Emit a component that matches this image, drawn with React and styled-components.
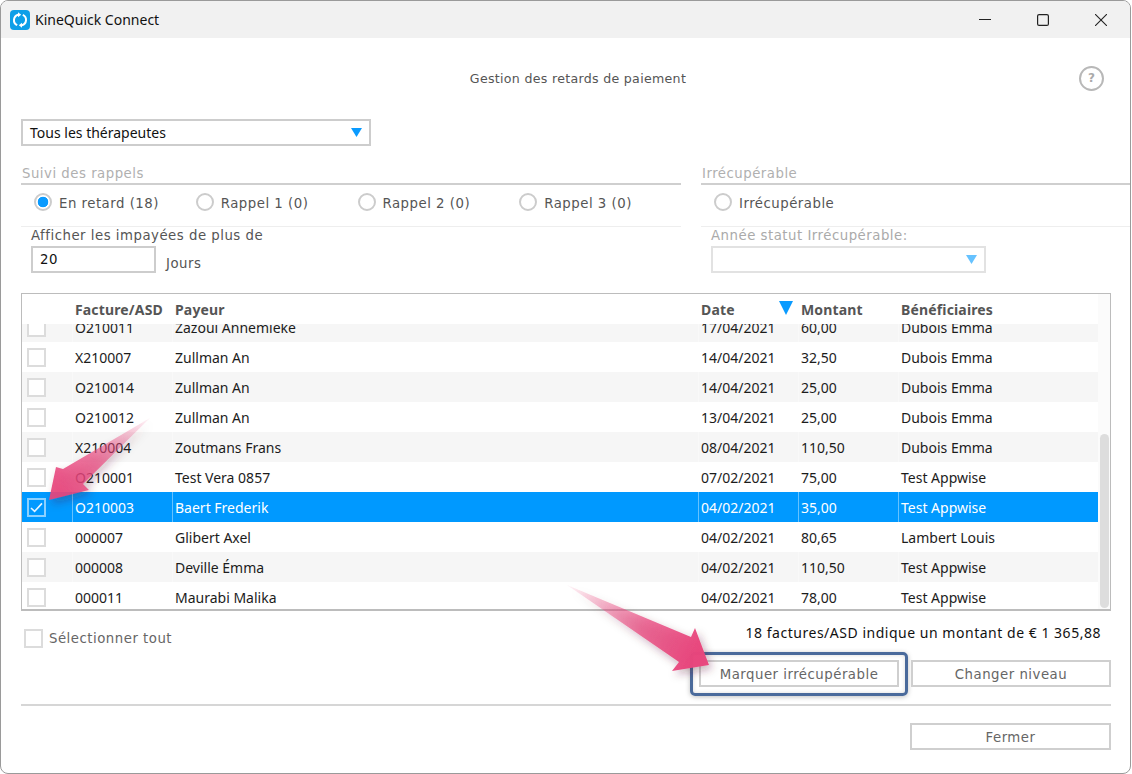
import React from 'react';
import styled, { createGlobalStyle } from 'styled-components';

const GlobalStyle = createGlobalStyle`
  html, body {
    margin: 0;
    padding: 0;
    background: #fff;
  }
  * {
    box-sizing: border-box;
  }
`;

const uiFont = `"DejaVu Sans", Verdana, sans-serif`;
const gridFont = `"Noto Sans", "Open Sans", sans-serif`;
const COLUMNS = '50px 100px 526px 100px 100px 200px';

const Window = styled.div`
  position: relative;
  width: 1131px;
  height: 774px;
  background: #fff;
  border: 1px solid #9a9a9a;
  border-radius: 8px;
  overflow: hidden;
  font-family: ${uiFont};
  letter-spacing: 0.5px;
`;

const TitleBar = styled.div`
  display: flex;
  align-items: center;
  height: 37px;
  padding-left: 9px;
  background: #f1f1f1;
`;

const AppName = styled.span`
  margin-left: 5px;
  flex: 1;
  font: 14px ${gridFont};
  letter-spacing: 0;
  color: #111;
`;

const WinButton = styled.span`
  display: flex;
  justify-content: center;
  width: 58px;
  color: #222;
`;

const Content = styled.div`
  padding: 0 19px 0 20px;
`;

const Header = styled.div`
  display: flex;
  align-items: center;
  height: 24px;
  margin-top: 28px;
`;

const PageTitle = styled.h1`
  flex: 1;
  margin: 0;
  padding: 1px 0 0 56px;
  text-align: center;
  font-size: 12.6px;
  font-weight: 400;
  letter-spacing: 0.3px;
  color: #555;
`;

const HelpIcon = styled.span`
  display: flex;
  align-items: center;
  justify-content: center;
  width: 25px;
  height: 25px;
  margin-right: 7px;
  border: 2px solid #b8b8b8;
  border-radius: 50%;
  font-size: 12px;
  font-weight: 700;
  letter-spacing: 0;
  color: #aaa;
`;

const Select = styled.div`
  display: flex;
  align-items: center;
  justify-content: space-between;
  width: ${(p) => p.$width}px;
  height: 27px;
  padding: 0 7px;
  background: #fff;
  border: 2px solid ${(p) => (p.$disabled ? '#e2e2e2' : '#cdcdcd')};
  font: 14px ${gridFont};
  letter-spacing: 0;
  color: #111;
`;

const TherapistSelect = styled(Select)`
  margin-top: 29px;
`;

const Caret = styled.span`
  width: 11px;
  height: 9px;
  background: ${(p) => (p.$disabled ? '#66c2ff' : '#0a9bff')};
  clip-path: polygon(0 0, 100% 0, 50% 100%);
`;

const Filters = styled.div`
  display: flex;
  gap: 20px;
  margin: 18px -19px 0 0;
`;

const Group = styled.section`
  width: ${(p) => p.$width}px;
`;

const GroupTitle = styled.div`
  height: 21px;
  padding: 2px 0 0 1px;
  border-bottom: 2px solid #cfcfcf;
  font-size: 13.3px;
  line-height: 16px;
  color: #b0b0b0;
`;

const RadioRow = styled.div`
  display: flex;
  height: 42px;
  padding: 8px 0 0 13px;
  border-bottom: 1px solid #eeeeee;
`;

const RadioItem = styled.label`
  display: flex;
  align-items: center;
  gap: 7px;
  width: 162.7px;
  height: 20px;
  font-size: 13.3px;
  color: #555;
  white-space: nowrap;
`;

const RadioCircle = styled.span`
  flex: none;
  width: 18px;
  height: 18px;
  margin-bottom: 2px;
  border: 2px solid #cccccc;
  border-radius: 50%;
  background: ${(p) =>
    p.$checked ? 'radial-gradient(circle, #0a9bff 0 5px, #fff 5.6px)' : '#fff'};
`;

const SubBlock = styled.div`
  padding-left: 10px;
`;

const SubLabel = styled.div`
  height: 19px;
  font-size: 13.3px;
  line-height: 18px;
  color: ${(p) => (p.$muted ? '#aaaaaa' : '#555')};
`;

const DaysRow = styled.div`
  display: flex;
  align-items: flex-end;
  gap: 10px;
`;

const DaysInput = styled.div`
  display: flex;
  align-items: center;
  width: 125px;
  height: 27px;
  padding-left: 7px;
  border: 2px solid #cdcdcd;
  font-size: 13.3px;
  color: #111;
`;

const DaysUnit = styled.span`
  padding-bottom: 2px;
  font-size: 13.3px;
  color: #555;
`;

const Table = styled.div`
  display: flex;
  height: 318px;
  margin-top: 20px;
  border: 1px solid #bcbcbc;
  border-bottom-width: 2px;
  overflow: hidden;
`;

const TableMain = styled.div`
  width: 1076px;
  overflow: hidden;
  font-family: ${gridFont};
  letter-spacing: 0;
`;

const HeadRow = styled.div`
  position: relative;
  z-index: 1;
  display: grid;
  grid-template-columns: ${COLUMNS};
  height: 30px;
  background: #fff;
`;

const HeadCell = styled.div`
  display: flex;
  align-items: center;
  justify-content: space-between;
  padding: 0 5px 0 3px;
  font-size: 14px;
  font-weight: 700;
  letter-spacing: 0.15px;
  color: #555;
`;

const SortMark = styled.span`
  width: 14px;
  height: 14px;
  margin-top: -2px;
  background: #0a9bff;
  clip-path: polygon(0 0, 100% 0, 50% 100%);
`;

const RowList = styled.div`
  margin-top: -12px;
`;

const Row = styled.div`
  display: grid;
  grid-template-columns: ${COLUMNS};
  height: 30px;
  background: ${(p) => (p.$selected ? '#0099ff' : p.$alt ? '#f6f6f6' : '#fff')};
  color: ${(p) => (p.$selected ? '#fff' : '#1c1c1c')};
`;

const Cell = styled.div`
  display: flex;
  align-items: center;
  padding-left: 2px;
  border-left: 1px solid rgba(255, 255, 255, 0.4);
  font-size: 14px;
  white-space: nowrap;
`;

const CheckCell = styled.div`
  display: flex;
  align-items: center;
  padding-left: 5px;
`;

const Box = styled.span`
  display: flex;
  flex: none;
  align-items: center;
  justify-content: center;
  width: 19px;
  height: 19px;
  border: 2px solid ${(p) => (p.$onBlue ? 'rgba(255,255,255,0.55)' : '#dcdcdc')};
  background: ${(p) => (p.$onBlue ? 'transparent' : '#fff')};
`;

const ScrollTrack = styled.div`
  flex: 1;
  padding: 140px 1px 1px 2px;
  background: #fbfbfb;
`;

const ScrollThumb = styled.div`
  height: 174px;
  background: #dddddd;
  border-radius: 5px;
`;

const Footer = styled.div`
  display: flex;
  justify-content: space-between;
  margin-top: 13px;
`;

const SelectAll = styled.label`
  display: flex;
  align-items: center;
  gap: 6px;
  height: 19px;
  margin: 5px 0 0 3px;
  font-size: 13.3px;
  color: #666;
`;

const Summary = styled.div`
  display: flex;
  flex-direction: column;
  align-items: flex-end;
`;

const Total = styled.div`
  height: 18px;
  margin-right: 10px;
  font: 14px/18px ${gridFont};
  letter-spacing: 0.52px;
  color: #111;
`;

const Actions = styled.div`
  display: flex;
  gap: 12px;
  margin-top: 18px;
`;

const Button = styled.button`
  position: relative;
  width: 200px;
  height: 27px;
  padding: 1px 0 0;
  background: #fff;
  border: 2px solid #cfcfcf;
  font-family: ${uiFont};
  font-size: 13.3px;
  letter-spacing: 0.5px;
  color: #666;
`;

const Highlight = styled.span`
  position: absolute;
  inset: -10px -11px -11px -11px;
  border: 3px solid #4a6a9b;
  border-radius: 5px;
  box-shadow: 0 1px 5px rgba(0, 0, 0, 0.25), inset 0 0 4px rgba(0, 0, 0, 0.15);
`;

const Divider = styled.div`
  height: 2px;
  margin-top: 17px;
  background: #d6d6d6;
`;

const BottomBar = styled.div`
  display: flex;
  justify-content: flex-end;
  margin-top: 17px;
`;

const WideButton = styled(Button)`
  width: 201px;
`;

const ArrowLayer = styled.svg`
  position: absolute;
  top: -1px;
  left: -1px;
  pointer-events: none;
`;

const rows = [
  ['O210011', 'Zazoui Annemieke', '17/04/2021', '60,00', 'Dubois Emma'],
  ['X210007', 'Zullman An', '14/04/2021', '32,50', 'Dubois Emma'],
  ['O210014', 'Zullman An', '14/04/2021', '25,00', 'Dubois Emma'],
  ['O210012', 'Zullman An', '13/04/2021', '25,00', 'Dubois Emma'],
  ['X210004', 'Zoutmans Frans', '08/04/2021', '110,50', 'Dubois Emma'],
  ['O210001', 'Test Vera 0857', '07/02/2021', '75,00', 'Test Appwise'],
  ['O210003', 'Baert Frederik', '04/02/2021', '35,00', 'Test Appwise'],
  ['000007', 'Glibert Axel', '04/02/2021', '80,65', 'Lambert Louis'],
  ['000008', 'Deville Émma', '04/02/2021', '110,50', 'Test Appwise'],
  ['000011', 'Maurabi Malika', '04/02/2021', '78,00', 'Test Appwise'],
];

const radios = ['En retard (18)', 'Rappel 1 (0)', 'Rappel 2 (0)', 'Rappel 3 (0)'];

const AppLogo = () => (
  <svg width="20" height="20" viewBox="0 0 20 20">
    <rect width="20" height="20" rx="4" fill="#0d9fe8" />
    <path d="M7.2 15.2A5.6 5.6 0 0 1 8.2 4.7" fill="none" stroke="#fff" strokeWidth="2" />
    <path d="M12.8 4.8A5.6 5.6 0 0 1 11.8 15.3" fill="none" stroke="#fff" strokeWidth="2" />
    <path d="M8 2.2 11.2 4.8 8 7.2Z" fill="#fff" />
    <path d="M12 12.8 8.8 15.2 12 17.8Z" fill="#fff" />
  </svg>
);

const App = () => {
  return (
    <>
      <GlobalStyle />
      <Window>
        <TitleBar>
          <AppLogo />
          <AppName>KineQuick Connect</AppName>
          <WinButton>
            <svg width="12" height="12" viewBox="0 0 12 12">
              <path d="M0 5.5H12" stroke="currentColor" strokeWidth="1" />
            </svg>
          </WinButton>
          <WinButton>
            <svg width="12" height="12" viewBox="0 0 12 12">
              <rect x="0.6" y="0.6" width="10.8" height="10.8" rx="1.5" fill="none" stroke="currentColor" strokeWidth="1.2" />
            </svg>
          </WinButton>
          <WinButton>
            <svg width="12" height="12" viewBox="0 0 12 12">
              <path d="M0 0 12 12M12 0 0 12" stroke="currentColor" strokeWidth="1.1" />
            </svg>
          </WinButton>
        </TitleBar>
        <Content>
          <Header>
            <PageTitle>Gestion des retards de paiement</PageTitle>
            <HelpIcon>?</HelpIcon>
          </Header>
          <TherapistSelect $width={350}>
            Tous les thérapeutes
            <Caret />
          </TherapistSelect>
          <Filters>
            <Group $width={660}>
              <GroupTitle>Suivi des rappels</GroupTitle>
              <RadioRow>
                {radios.map((label, i) => (
                  <RadioItem key={label}>
                    <RadioCircle $checked={i === 0} />
                    {label}
                  </RadioItem>
                ))}
              </RadioRow>
              <SubBlock>
                <SubLabel>Afficher les impayées de plus de</SubLabel>
                <DaysRow>
                  <DaysInput>20</DaysInput>
                  <DaysUnit>Jours</DaysUnit>
                </DaysRow>
              </SubBlock>
            </Group>
            <Group $width={431}>
              <GroupTitle>Irrécupérable</GroupTitle>
              <RadioRow>
                <RadioItem>
                  <RadioCircle />
                  Irrécupérable
                </RadioItem>
              </RadioRow>
              <SubBlock>
                <SubLabel $muted>Année statut Irrécupérable:</SubLabel>
                <Select $width={275} $disabled>
                  <span />
                  <Caret $disabled />
                </Select>
              </SubBlock>
            </Group>
          </Filters>
          <Table>
            <TableMain>
              <HeadRow>
                <HeadCell />
                <HeadCell>Facture/ASD</HeadCell>
                <HeadCell>Payeur</HeadCell>
                <HeadCell>
                  Date
                  <SortMark />
                </HeadCell>
                <HeadCell>Montant</HeadCell>
                <HeadCell>Bénéficiaires</HeadCell>
              </HeadRow>
              <RowList>
                {rows.map((row, i) => {
                  const selected = row[0] === 'O210003';
                  return (
                    <Row key={row[0]} $alt={i % 2 === 0} $selected={selected}>
                      <CheckCell>
                        <Box $onBlue={selected}>
                          {selected && (
                            <svg width="13" height="11" viewBox="0 0 13 11">
                              <path d="M1 6 4.6 9.4 12 1.4" fill="none" stroke="rgba(255,255,255,0.9)" strokeWidth="1.6" />
                            </svg>
                          )}
                        </Box>
                      </CheckCell>
                      {row.map((value) => (
                        <Cell key={value}>{value}</Cell>
                      ))}
                    </Row>
                  );
                })}
              </RowList>
            </TableMain>
            <ScrollTrack>
              <ScrollThumb />
            </ScrollTrack>
          </Table>
          <Footer>
            <SelectAll>
              <Box />
              Sélectionner tout
            </SelectAll>
            <Summary>
              <Total>18 factures/ASD indique un montant de € 1 365,88</Total>
              <Actions>
                <Button>
                  Marquer irrécupérable
                  <Highlight />
                </Button>
                <Button>Changer niveau</Button>
              </Actions>
            </Summary>
          </Footer>
          <Divider />
          <BottomBar>
            <WideButton>Fermer</WideButton>
          </BottomBar>
        </Content>
        <ArrowLayer width="1132" height="774" viewBox="0 0 1132 774">
          <defs>
            <linearGradient id="arrowLeft" gradientUnits="userSpaceOnUse" x1="150" y1="418" x2="60" y2="490">
              <stop offset="0" stopColor="#e8457c" stopOpacity="0.05" />
              <stop offset="0.6" stopColor="#e8457c" stopOpacity="0.7" />
              <stop offset="1" stopColor="#e8457c" stopOpacity="0.92" />
            </linearGradient>
            <linearGradient id="arrowRight" gradientUnits="userSpaceOnUse" x1="567" y1="585" x2="695" y2="655">
              <stop offset="0" stopColor="#e8457c" stopOpacity="0.05" />
              <stop offset="0.6" stopColor="#e8457c" stopOpacity="0.75" />
              <stop offset="1" stopColor="#e8457c" stopOpacity="0.98" />
            </linearGradient>
            <filter id="arrowShadow" x="-20%" y="-20%" width="150%" height="150%">
              <feDropShadow dx="3" dy="4" stdDeviation="4" floodColor="#5a2038" floodOpacity="0.35" />
            </filter>
          </defs>
          <path d="M150 418 63 469 56 467 49 500 89 490 83 484Z" fill="url(#arrowLeft)" filter="url(#arrowShadow)" />
          <path d="M567 585 691 637 695 628 709 665 672 671 679 662Z" fill="url(#arrowRight)" filter="url(#arrowShadow)" />
        </ArrowLayer>
      </Window>
    </>
  );
};

export default App;
